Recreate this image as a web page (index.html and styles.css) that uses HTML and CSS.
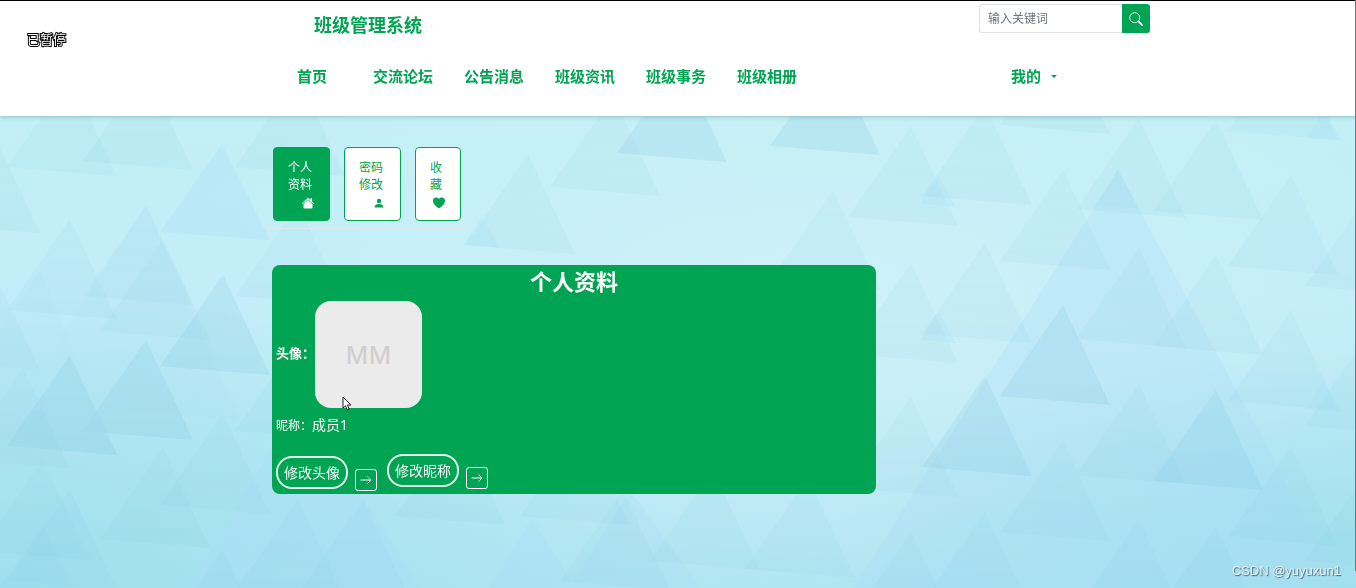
FILE: index.html
```
<!DOCTYPE html>
<html lang="zh-CN">
<head>
  <meta charset="UTF-8">
  <meta name="viewport" content="width=device-width, initial-scale=1.0">
  <title>班级管理系统</title>
  <link rel="stylesheet" href="styles.css">
</head>
<body>
  <svg class="page-bg" viewBox="0 0 1356 588" preserveAspectRatio="xMidYMid slice" aria-hidden="true">
    <defs>
      <linearGradient id="base" x1="0" y1="0" x2="0" y2="1">
        <stop offset="0.2" stop-color="#c1f0f5"/>
        <stop offset="0.5" stop-color="#c2edf8"/>
        <stop offset="1" stop-color="#b2e5f2"/>
      </linearGradient>
      <radialGradient id="light" cx="0.6" cy="0.5" r="0.5">
        <stop offset="0" stop-color="#cdf1f8"/>
        <stop offset="1" stop-color="#cdf1f8" stop-opacity="0"/>
      </radialGradient>
      <radialGradient id="deep" cx="0" cy="1" r="0.5">
        <stop offset="0" stop-color="#9fe0ee"/>
        <stop offset="1" stop-color="#9fe0ee" stop-opacity="0"/>
      </radialGradient>
      <radialGradient id="deepRight" cx="1" cy="1" r="0.4">
        <stop offset="0" stop-color="#a0e0ee"/>
        <stop offset="1" stop-color="#a0e0ee" stop-opacity="0"/>
      </radialGradient>
      <linearGradient id="tri" x1="0" y1="0" x2="0" y2="1">
        <stop offset="0" stop-color="#7fc4dc" stop-opacity="0.08"/>
        <stop offset="1" stop-color="#7fc4dc" stop-opacity="0.1"/>
      </linearGradient>
      <path id="t" d="M63 0L0 91L110 100z"/>
      <path id="s" d="M18 0L0 28L36 31z"/>
    </defs>
    <rect width="1356" height="588" fill="url(#base)"/>
    <rect width="1356" height="588" fill="url(#light)"/>
    <rect width="1356" height="588" fill="url(#deep)"/>
    <rect width="1356" height="588" fill="url(#deepRight)"/>
    <!-- large faint shapes -->
    <g fill="#a9dcf6" opacity="0.28">
      <path d="M1118 170L840 610L1360 620z"/>
      <path d="M222 144L160 232L270 240z"/>
      <path d="M146 205L20 400L240 420z" opacity="0.4"/>
      <path d="M40 270L-60 430L117 455z" opacity="0.4"/>
      <path d="M300 400L190 588L420 588z"/>
      <path d="M532 518L490 588L575 588z"/>
      <path d="M630 490L570 588L700 588z"/>
    </g>
    <g fill="url(#tri)">
      <use href="#t" x="7" y="76"/>
      <use href="#t" x="83" y="70"/>
      <use href="#t" x="-70" y="133"/>
      <use href="#t" x="7" y="219"/>
      <use href="#t" x="83" y="205"/>
      <use href="#t" x="100" y="240"/>
      <use href="#t" x="160" y="275"/>
      <use href="#t" x="235" y="205"/>
      <use href="#t" x="-70" y="270"/>
      <use href="#t" x="83" y="340"/>
      <use href="#t" x="7" y="355"/>
      <use href="#t" x="-40" y="368"/>
      <use href="#t" x="235" y="340"/>
      <use href="#t" x="160" y="414"/>
      <use href="#t" x="100" y="448"/>
      <use href="#t" x="-20" y="460"/>
      <use href="#t" x="-20" y="525"/>
      <use href="#t" x="7" y="490"/>
      <use href="#t" x="160" y="550"/>
      <use href="#t" x="235" y="500"/>
      <use href="#t" x="300" y="500"/>
      <use href="#t" x="235" y="76"/>
      <use href="#t" x="465" y="154"/>
      <use href="#t" x="550" y="96"/>
      <use href="#t" x="617" y="62"/>
      <use href="#t" x="770" y="55"/>
      <use href="#t" x="770" y="190"/>
      <use href="#t" x="848" y="126"/>
      <use href="#t" x="922" y="105"/>
      <use href="#t" x="1000" y="34"/>
      <use href="#t" x="1000" y="170"/>
      <use href="#t" x="1076" y="118"/>
      <use href="#t" x="1228" y="40"/>
      <use href="#t" x="1153" y="120"/>
      <use href="#t" x="1228" y="175"/>
      <use href="#t" x="1305" y="195"/>
      <use href="#t" x="848" y="263"/>
      <use href="#t" x="922" y="243"/>
      <use href="#t" x="1076" y="248"/>
      <use href="#t" x="1153" y="255"/>
      <use href="#t" x="1000" y="305"/>
      <use href="#t" x="1228" y="310"/>
      <use href="#t" x="1305" y="335"/>
      <use href="#t" x="848" y="397"/>
      <use href="#t" x="922" y="376"/>
      <use href="#t" x="1076" y="384"/>
      <use href="#t" x="1153" y="390"/>
      <use href="#t" x="1000" y="441"/>
      <use href="#t" x="1228" y="446"/>
      <use href="#t" x="1305" y="470"/>
      <use href="#t" x="848" y="532"/>
      <use href="#t" x="922" y="512"/>
      <use href="#t" x="1076" y="520"/>
      <use href="#t" x="1153" y="526"/>
      <use href="#t" x="395" y="425"/>
      <use href="#t" x="520" y="425"/>
      <use href="#t" x="560" y="490"/>
      <use href="#t" x="650" y="470"/>
      <use href="#t" x="745" y="478"/>
    </g>
    <!-- darker ones -->
    <g fill="#7fc4dc" opacity="0.1">
      <use href="#t" x="160" y="275"/>
      <use href="#t" x="83" y="340"/>
      <use href="#t" x="7" y="355"/>
      <use href="#t" x="617" y="62"/>
      <use href="#t" x="770" y="55"/>
      <use href="#t" x="1000" y="305"/>
      <use href="#t" x="922" y="376"/>
      <use href="#t" x="1153" y="390"/>
    </g>
    <g fill="#9fdcf2" opacity="0.2">
      <use href="#s" x="464" y="217"/>
      <use href="#s" x="920" y="176"/>
      <use href="#s" x="920" y="312"/>
      <use href="#s" x="1153" y="450"/>
      <use href="#s" x="1306" y="381"/>
      <use href="#s" x="1306" y="110"/>
      <path d="M1118 170L1095 206L1139 208z"/>
      <path d="M96 411L83 452L117 455z"/>
      <path d="M70 490L45 525L88 529z"/>
    </g>
  </svg>

  <header class="header">
    <div class="container">
      <div class="header-top">
        <a class="logo" href="#">班级管理系统</a>
        <form class="search">
          <input type="text" aria-label="关键词" placeholder="输入关键词">
          <button type="submit" aria-label="搜索">
            <svg viewBox="0 0 16 16" width="14" height="14" fill="none" stroke="currentColor">
              <circle cx="6.5" cy="6.5" r="5.7"/>
              <path d="M10.8 10.8L15 15" stroke-width="2" stroke-linecap="round"/>
            </svg>
          </button>
        </form>
      </div>
      <nav class="nav">
        <a href="#">首页</a>
        <a href="#">交流论坛</a>
        <a href="#">公告消息</a>
        <a href="#">班级资讯</a>
        <a href="#">班级事务</a>
        <a href="#">班级相册</a>
        <a class="mine" href="#">我的 <span class="caret"></span></a>
      </nav>
    </div>
    <span class="paused">已暂停</span>
  </header>

  <main class="container content">
    <div class="tabs">
      <a class="tab active" href="#">
        <span>个人<br>资料</span>
        <svg viewBox="0 0 14 14" width="14" height="14" fill="currentColor">
          <path d="M7 1.500L1 7.200L1.800 8L7 3.200L12.200 8L13 7.200L11 5.300V2.200H9.500V3.900z"/>
          <path d="M7 4L2.500 8.200V11.500Q2.500 12.500 3.500 12.500H10.500Q11.500 12.500 11.500 11.500V8.200z"/>
        </svg>
      </a>
      <a class="tab" href="#">
        <span>密码<br>修改</span>
        <svg viewBox="0 0 14 14" width="14" height="14" fill="currentColor">
          <circle cx="7" cy="5" r="2.200"/>
          <path d="M2.500 11.500C2.500 9 4.500 8 7 8S11.500 9 11.500 11.500z"/>
        </svg>
      </a>
      <a class="tab" href="#">
        <span>收<br>藏</span>
        <svg viewBox="0 0 14 14" width="14" height="14" fill="currentColor">
          <path d="M7 12.500C4 10.300 1 8 1 4.700C1 1.200 5.200 0.500 7 3C8.800 0.500 13 1.200 13 4.700C13 8 10 10.300 7 12.500z"/>
        </svg>
      </a>
    </div>

    <section class="card">
      <h2>个人资料</h2>
      <div class="avatar-row">
        <b>头像：</b>
        <div class="avatar">
          MM
          <svg class="cursor" viewBox="0 0 10 15" width="10" height="15">
            <path d="M1 1V12L3.500 9.800L5.300 13.800L7.200 13L5.400 9H9z" fill="#fff" stroke="#222"/>
          </svg>
        </div>
      </div>
      <p class="nickname">昵称：<span>成员1</span></p>
      <div class="actions">
        <div class="action">
          <button class="pill">修改头像</button>
          <button class="arrow" aria-label="修改头像">
            <svg viewBox="0 0 14 14" width="14" height="14"><path d="M1.500 7H12M8 3L12 7L8 11"/></svg>
          </button>
        </div>
        <div class="action">
          <button class="pill">修改昵称</button>
          <button class="arrow" aria-label="修改昵称">
            <svg viewBox="0 0 14 14" width="14" height="14"><path d="M1.500 7H12M8 3L12 7L8 11"/></svg>
          </button>
        </div>
      </div>
    </section>
  </main>

  <div class="edge"></div>
  <div class="watermark">CSDN @yuyuxun1</div>
</body>
</html>
```
FILE: styles.css
```
* {
  box-sizing: border-box;
}
body {
  margin: 0;
  min-height: 100vh;
  position: relative;
  font-family: "Noto Sans", "Noto Sans CJK SC", sans-serif;
  font-size: 12px;
  color: #00a452;
}
a {
  color: inherit;
  text-decoration: none;
}
button, input {
  font-family: inherit;
}
.page-bg {
  position: fixed;
  top: 0;
  left: 0;
  width: 100%;
  height: 100%;
  z-index: -1;
}
.container {
  max-width: 944px;
  margin: 0 auto;
}
/* Header */
.header {
  position: relative;
  height: 116px;
  background: #fff;
  border-top: 1px solid #000;
  box-shadow: 0 1px 4px rgba(0, 60, 70, 0.25);
}
.header-top {
  display: flex;
  justify-content: space-between;
  padding: 3px 0 0 108px;
}
.logo {
  font-size: 18px;
  line-height: 42px;
  font-weight: bold;
}
.search {
  display: flex;
  height: 29px;
}
.search input {
  width: 143px;
  padding: 0 8px;
  border: 1px solid #dee2e6;
  border-right: 0;
  border-radius: 3px 0 0 3px;
  font-size: 12px;
}
.search input::placeholder {
  color: #6c757d;
}
.search button {
  display: flex;
  align-items: center;
  justify-content: center;
  width: 28px;
  padding: 0;
  border: 0;
  border-radius: 0 3px 3px 0;
  background: #00a452;
  color: #fff;
}
.nav {
  display: flex;
  gap: 31px;
  padding: 18px 93px 0 76px;
  font-size: 15px;
  line-height: 24px;
  font-weight: bold;
}
.nav a {
  min-width: 60px;
  text-align: center;
}
.nav .mine {
  display: flex;
  align-items: center;
  gap: 10px;
  margin-left: auto;
  min-width: 0;
}
.caret {
  border: 3px solid transparent;
  border-top-color: #00a452;
  border-bottom: 0;
}
.paused {
  position: absolute;
  top: 28px;
  left: 27px;
  font-size: 13px;
  line-height: 20px;
  color: #fff;
  -webkit-text-stroke: 2px #000;
  paint-order: stroke fill;
}
/* Content */
.content {
  padding: 31px 60px 0;
}
.tabs {
  display: flex;
  gap: 14px;
  width: fit-content;
  padding: 0 8px 7px 7px;
  border-bottom: 1px solid #dee8ea;
}
.tab {
  display: flex;
  flex-direction: column;
  gap: 3px;
  min-width: 46px;
  height: 74px;
  padding: 11px 14px 0;
  border: 1px solid #00a452;
  border-radius: 4px;
  background: #fff;
  line-height: 17px;
}
.tab span {
  padding-right: 3px;
}
.tab svg {
  align-self: flex-end;
}
.tab.active {
  background: #00a452;
  color: #fff;
}
/* Profile card */
.card {
  max-width: 604px;
  margin: 36px 0 0 6px;
  padding: 0 4px 3px;
  border-radius: 8px;
  background: #00a452;
  color: #fff;
}
.card h2 {
  margin: 0;
  padding-bottom: 4px;
  font-size: 22px;
  line-height: 32px;
  text-align: center;
}
.avatar-row {
  display: flex;
  align-items: center;
  font-size: 13px;
}
.avatar-row b {
  padding-bottom: 4px;
}
.avatar {
  position: relative;
  width: 107px;
  height: 107px;
  border-radius: 16px;
  background: #ebebeb;
  color: #cfcfcf;
  font-family: "Noto Sans", sans-serif;
  font-size: 25px;
  font-weight: 500;
  line-height: 107px;
  text-align: center;
}
.cursor {
  position: absolute;
  left: 27px;
  bottom: -3px;
}
.nickname {
  margin: 6px 0 17px;
  line-height: 22px;
}
.nickname span {
  font-size: 14px;
}
.actions {
  display: flex;
  align-items: flex-start;
  gap: 10px;
}
.action {
  display: flex;
  align-items: flex-end;
  gap: 7px;
}
.action:first-child {
  padding-top: 2px;
}
.pill {
  height: 33px;
  margin-bottom: 2px;
  padding: 0 6px 2px;
  border: 2px solid #e4f5ec;
  border-radius: 16px;
  background: none;
  color: #fff;
  font-size: 14px;
}
.arrow {
  display: flex;
  align-items: center;
  justify-content: center;
  width: 22px;
  height: 22px;
  padding: 0;
  border: 1px solid #fff;
  border-radius: 3px;
  background: none;
}
.arrow svg {
  fill: none;
  stroke: #fff;
}
.edge {
  position: absolute;
  top: 0;
  right: 0;
  bottom: 17px;
  width: 1px;
  background: #777;
}
.watermark {
  position: absolute;
  right: 15px;
  bottom: 8px;
  font-family: "Liberation Sans", Arial, sans-serif;
  font-size: 13px;
  line-height: 18px;
  color: #e2f1f5;
  text-shadow: 1px 1px 1px #4f6a75;
}
```
